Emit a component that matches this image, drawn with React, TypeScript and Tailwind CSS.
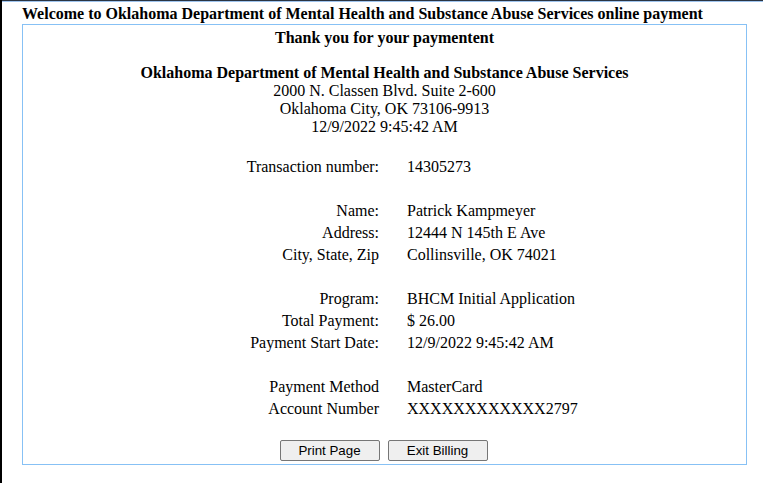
const rows: ([string, string] | null)[] = [
  ['Transaction number:', '14305273'],
  null,
  ['Name:', 'Patrick Kampmeyer'],
  ['Address:', '12444 N 145th E Ave'],
  ['City, State, Zip', 'Collinsville, OK 74021'],
  null,
  ['Program:', 'BHCM Initial Application'],
  ['Total Payment:', '$ 26.00'],
  ['Payment Start Date:', '12/9/2022 9:45:42 AM'],
  null,
  ['Payment Method', 'MasterCard'],
  ['Account Number', 'XXXXXXXXXXXX2797'],
];

export default function App() {
  return (
    <div className="min-h-[483px] border-l-2 border-black bg-white font-['Liberation_Serif',serif] text-[16px] leading-[18px] text-black">
      <div className="h-px bg-[#2a3442]" />
      <div className="h-px bg-[#9fc4ee]" />
      <div className="pl-5 pt-[3px]">
        <h1 className="font-bold">
          Welcome to Oklahoma Department of Mental Health and Substance Abuse Services online payment
        </h1>
        <div className="mt-px w-[725px] border border-[#87c1f5] pt-[4px] pb-[3px]">
          <div className="text-center font-bold">Thank you for your paymentent</div>

          <div className="mt-[17px] text-center">
            <div className="font-bold">Oklahoma Department of Mental Health and Substance Abuse Services</div>
            <div>2000 N. Classen Blvd. Suite 2-600</div>
            <div>Oklahoma City, OK 73106-9913</div>
            <div>12/9/2022 9:45:42 AM</div>
          </div>

          <div className="mt-[20px] grid grid-cols-[356px_1fr] gap-x-[28px]">
            {rows.map((row, i) =>
              row ? (
                <div key={i} className="contents">
                  <div className="py-[2px] text-right">{row[0]}</div>
                  <div className="py-[2px]">{row[1]}</div>
                </div>
              ) : (
                <div key={i} className="col-span-2 h-[22px]" />
              )
            )}
          </div>

          <div className="mt-[20px] flex justify-center gap-2 pr-[2px] font-['Liberation_Sans',Arial,sans-serif] text-[13.33px]">
            <button className="h-[21px] w-[100px] rounded-[2px] border border-[#767676] bg-[#efefef] leading-[19px]">
              Print Page
            </button>
            <button className="h-[21px] w-[100px] rounded-[2px] border border-[#767676] bg-[#efefef] leading-[19px]">
              Exit Billing
            </button>
          </div>
        </div>
      </div>
    </div>
  );
}
